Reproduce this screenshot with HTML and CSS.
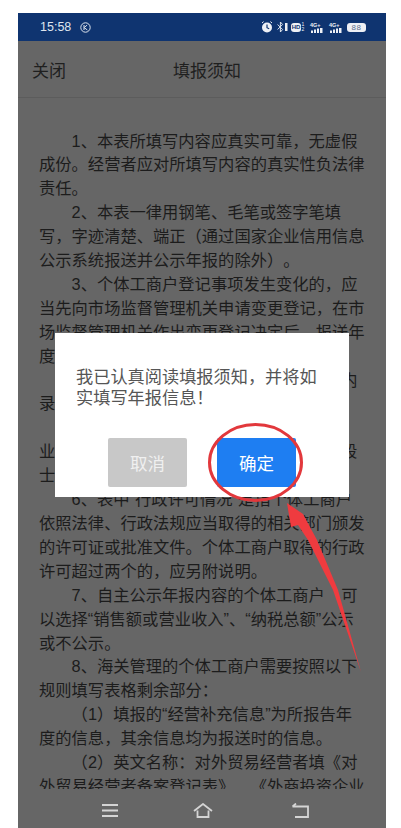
FILE: index.html
```html
<!doctype html>
<html lang="zh">
<head>
  <meta charset="utf-8" />
  <meta name="viewport" content="width=device-width, initial-scale=1"/>
  <title>填报须知</title>
  <link rel="stylesheet" href="styles.css">
</head>
<body>
  <div class="screen">
    <div class="status">
      <div class="statusLeft">
        <span class="time">15:58</span>
        <svg width="11" height="11" viewBox="0 0 11 11"><circle cx="5.500" cy="5.500" r="4.700" fill="none" stroke="#dfe5ee" stroke-width="1"/><path d="M4 3v5M7.200 3 4.200 5.600 7.400 8" fill="none" stroke="#dfe5ee" stroke-width="1"/></svg>
      </div>
      <div class="statusRight">
        <svg width="12" height="12" viewBox="0 0 12 12"><circle cx="6" cy="6.500" r="5" fill="#eef0f5"/><path d="M6 3.500v3.200l2.200 1" fill="none" stroke="#0f3470" stroke-width="1.200"/><path d="M1 2 2.600.6M11 2 9.400.6" stroke="#eef0f5" stroke-width="1"/></svg>
        <svg width="11" height="12" viewBox="0 0 11 12"><path d="M.6 3.500 5.600 8.500 3.400 11V1L5.600 3.500.6 8.500" fill="none" stroke="#dfe5ee" stroke-width="1"/><rect x="8" y="2" width="2.500" height="8" fill="#eef0f5"/></svg>
        <span class="hd">HD</span>
        <span class="hdSide">1<br>2</span>
        <svg width="15" height="12" viewBox="0 0 15 12"><text x="1" y="5.500" class="netText">4G+</text><path d="M2 9.500h2V12H2zM5 8.500h2V12H5zM8 7.500h2V12H8zM11 7h2.500v5H11z" fill="#eef0f5"/></svg>
        <svg width="15" height="12" viewBox="0 0 15 12"><text x="1" y="5.500" class="netText">4G+</text><path d="M2 9.500h2V12H2zM5 8.500h2V12H5zM8 7.500h2V12H8zM11 7h2.500v5H11z" fill="#eef0f5"/></svg>
        <span class="battery">88</span>
      </div>
    </div>

    <div class="nav">
      <span class="navClose">关闭</span>
      <span class="navTitle">填报须知</span>
    </div>

    <div class="notice">
      <p>1、本表所填写内容应真实可靠，无虚假成份。经营者应对所填写内容的真实性负法律责任。</p>
      <p>2、本表一律用钢笔、毛笔或签字笔填写，字迹清楚、端正（通过国家企业信用信息公示系统报送并公示年报的除外）。</p>
      <p>3、个体工商户登记事项发生变化的，应当先向市场监督管理机关申请变更登记，在市场监督管理机关作出变更登记决定后，报送年度报告。</p>
      <p>4、填写内容须与登记信息一致，年报内录入。</p>
      <p class="blank">&nbsp;</p>
      <p class="noIndent">业主或经营者姓名、证件号码及联系方式5段士。</p>
      <p>6、表中“行政许可情况”是指个体工商户依照法律、行政法规应当取得的相关部门颁发的许可证或批准文件。个体工商户取得的行政许可超过两个的，应另附说明。</p>
      <p>7、自主公示年报内容的个体工商户　可以选择“销售额或营业收入”、“纳税总额”公示或不公示。</p>
      <p>8、海关管理的个体工商户需要按照以下规则填写表格剩余部分：</p>
      <p>（1）填报的“经营补充信息”为所报告年度的信息，其余信息均为报送时的信息。</p>
      <p>（2）英文名称：对外贸易经营者填《对外贸易经营者备案登记表》、《外商投资企业批准证书》。</p>
    </div>

    <div class="bottomBar">
      <svg width="16" height="13" viewBox="0 0 16 13"><path d="M0 1h16M0 6.500h16M0 12h16" stroke="#d4d4d4" stroke-width="1.800"/></svg>
      <svg width="20" height="15" viewBox="0 0 20 15"><path d="M1 8 10 1l9 7M4.500 7.500V14h11V7.500" fill="none" stroke="#d4d4d4" stroke-width="1.800"/></svg>
      <svg class="backIcon" width="17" height="15" viewBox="0 0 17 15"><path d="M.5 3.500H16V14H3M.5 3.500 4 .5" fill="none" stroke="#d4d4d4" stroke-width="1.800"/></svg>
    </div>

    <div class="dialog">
      <p class="dialogText">我已认真阅读填报须知，并将如实填写年报信息！</p>
      <div class="dialogBtns">
        <button class="btn btnCancel" type="button">取消</button>
        <button class="btn btnOk" type="button">确定</button>
      </div>
    </div>

    <!-- red annotation drawn over the screenshot -->
    <svg class="mark" width="368" height="815" viewBox="0 0 368 815">
      <ellipse cx="237.500" cy="449.500" rx="46" ry="38" fill="none" stroke="#e2383c" stroke-width="3"/>
      <path d="M269 490 285 501 299 527 320 577 343 659 315 577 290 527 280 512 273 514Z" fill="#ef3b3f"/>
    </svg>
  </div>
</body>
</html>
```

FILE: styles.css
```css
*,*::before,*::after{box-sizing:border-box}
html,body{margin:0;height:100%}
body{background:#fff;font-family:"Liberation Sans","Noto Sans CJK SC",sans-serif;overflow:hidden;text-spacing-trim:space-all}
.screen{position:relative;width:368px;height:815px;margin:13px 0 0 18px;background:#666;display:flex;flex-direction:column;overflow:hidden}

.status{height:28px;flex:none;background:#0f3470;color:#dfe5ee;display:flex;justify-content:space-between;align-items:center;padding:0 20px 0 22px}
.statusLeft,.statusRight{display:flex;align-items:center}
.statusLeft{gap:9px}
.statusRight{gap:4px}
.time{font-size:12.500px}
.hd{width:10px;background:#eef0f5;color:#0f3470;font-size:6px;font-weight:700;line-height:9px;text-align:center;border-radius:3px;margin-left:-1px;margin-right:-4px}
.hdSide{width:4px;font-size:5px;line-height:5px;text-align:center;color:#eef0f5}
.netText{font-size:5.500px;font-weight:700;fill:#eef0f5}
.battery{width:19px;background:#eef0f5;color:#5f6f8c;font-size:8px;line-height:9px;text-align:center;border-radius:3px;letter-spacing:.5px}

.nav{height:57px;flex:none;position:relative;display:flex;align-items:center;justify-content:center;padding-left:10px;border-bottom:1px solid #5c5c5c;color:#1f1f1f;font-size:17px}
.navClose{position:absolute;left:14px}

.notice{flex:1;min-height:0;overflow:hidden;padding:31.500px 20px 0 21px;color:#1c1c1c;font-size:16.300px;line-height:23.900px}
.notice p{margin:0;text-indent:2em}
.notice p.noIndent{text-indent:0}

.bottomBar{height:39px;flex:none;display:flex;align-items:center;gap:75px;padding:3px 0 0 84px}
.backIcon{margin-left:4px}

.dialog{position:absolute;left:37px;top:320px;width:294px;height:164px;background:#fff;padding:34px 21px 0;color:#555}
.dialogText{margin:0;font-size:17.200px;line-height:20.500px}
.dialogBtns{display:flex;justify-content:center;gap:30px;margin-top:30px}
.btn{width:79px;height:49px;border:none;border-radius:2px;color:#f0f0f0;font-family:inherit;font-size:17.500px;padding:0}
.btnCancel{background:#c8c8c8}
.btnOk{background:#1e7ef2;color:#fff}

.mark{position:absolute;left:0;top:0;pointer-events:none}
```
